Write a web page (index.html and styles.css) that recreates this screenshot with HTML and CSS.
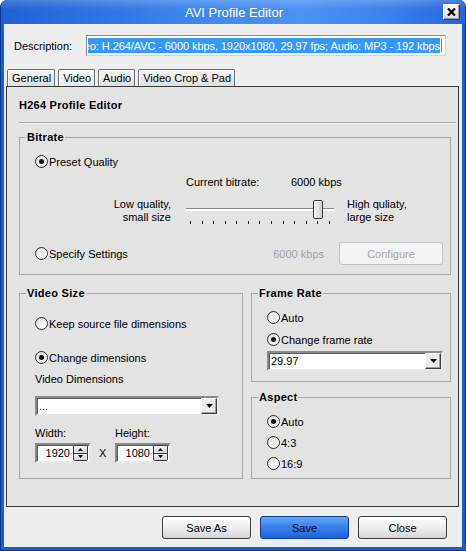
FILE: index.html
```html
<!DOCTYPE html>
<html>
<head>
<meta charset="utf-8">
<title>AVI Profile Editor</title>
<link rel="stylesheet" href="styles.css">
</head>
<body>
<div class="window">
  <div class="titlebar">
    <span></span>
    <span class="title">AVI Profile Editor</span>
    <span class="close-btn"><svg width="9" height="8" viewBox="0 0 9 8"><path d="M1 0.5 L8 7.5 M8 0.5 L1 7.5" stroke="#000" stroke-width="2.2" fill="none"/></svg></span>
  </div>
  <div class="client">
    <div class="desc-row">
      <span class="desc-label">Description:</span>
      <div class="desc-input sunken">
        <div class="desc-sel"><span class="desc-text">eo: H.264/AVC - 6000 kbps, 1920x1080, 29.97 fps; Audio: MP3 - 192 kbps</span></div>
        <span class="caret"></span>
      </div>
    </div>
    <div class="tabs">
      <span class="tab">General</span>
      <span class="tab active">Video</span>
      <span class="tab">Audio</span>
      <span class="tab">Video Crop &amp; Pad</span>
    </div>
    <div class="panel">
      <div class="panel-title">H264 Profile Editor</div>
      <div class="sep"></div>

      <div class="group bitrate">
        <div class="group-title">Bitrate</div>
        <div class="radio-row first"><span class="radio on"></span><span>Preset Quality</span></div>
        <div class="current-row"><span class="cur-label">Current bitrate:</span><span>6000 kbps</span></div>
        <div class="slider-row">
          <div class="low-label">Low quality,<br>small size</div>
          <div class="slider">
            <div class="track"></div>
            <div class="thumb"></div>
            <div class="ticks"><i></i><i></i><i></i><i></i><i></i><i></i><i></i><i></i><i></i><i></i><i></i><i></i><i></i></div>
          </div>
          <div class="high-label">High quliaty,<br>large size</div>
        </div>
        <div class="specify-row">
          <div class="radio-row inline"><span class="radio"></span><span>Specify Settings</span></div>
          <span class="disabled-text">6000 kbps</span>
          <span class="btn disabled">Configure</span>
        </div>
      </div>

      <div class="cols">
        <div class="group videosize">
          <div class="group-title">Video Size</div>
          <div class="radio-row vs1"><span class="radio"></span><span>Keep source file dimensions</span></div>
          <div class="radio-row vs2"><span class="radio on"></span><span>Change dimensions</span></div>
          <div class="vd-label">Video Dimensions</div>
          <div class="combo sunken vd-combo"><span class="combo-text">...</span><span class="combo-btn"><svg width="7" height="4" viewBox="0 0 7 4"><path d="M0 0 H7 L3.5 4 Z" fill="#000"/></svg></span></div>
          <div class="dims">
            <span class="dim-label">Width:</span><span></span><span class="dim-label">Height:</span>
            <div class="spin sunken"><span class="spin-val">1920</span><span class="spin-btns"><span class="sb"><svg width="5" height="3" viewBox="0 0 5 3"><path d="M2.5 0 L5 3 H0 Z" fill="#000"/></svg></span><span class="sb"><svg width="5" height="3" viewBox="0 0 5 3"><path d="M0 0 H5 L2.5 3 Z" fill="#000"/></svg></span></span></div>
            <span class="x-label">X</span>
            <div class="spin sunken"><span class="spin-val">1080</span><span class="spin-btns"><span class="sb"><svg width="5" height="3" viewBox="0 0 5 3"><path d="M2.5 0 L5 3 H0 Z" fill="#000"/></svg></span><span class="sb"><svg width="5" height="3" viewBox="0 0 5 3"><path d="M0 0 H5 L2.5 3 Z" fill="#000"/></svg></span></span></div>
          </div>
        </div>
        <div class="col-right">
          <div class="group framerate">
            <div class="group-title">Frame Rate</div>
            <div class="radio-row fr1"><span class="radio"></span><span>Auto</span></div>
            <div class="radio-row fr2"><span class="radio on"></span><span>Change frame rate</span></div>
            <div class="combo sunken fr-combo"><span class="combo-text">29.97</span><span class="combo-btn"><svg width="7" height="4" viewBox="0 0 7 4"><path d="M0 0 H7 L3.5 4 Z" fill="#000"/></svg></span></div>
          </div>
          <div class="group aspect">
            <div class="group-title">Aspect</div>
            <div class="radio-row as1"><span class="radio on"></span><span>Auto</span></div>
            <div class="radio-row as2"><span class="radio"></span><span>4:3</span></div>
            <div class="radio-row as2"><span class="radio"></span><span>16:9</span></div>
          </div>
        </div>
      </div>
    </div>
    <div class="buttons">
      <span class="btn">Save As</span>
      <span class="btn primary">Save</span>
      <span class="btn">Close</span>
    </div>
  </div>
</div>
</body>
</html>
```
FILE: styles.css
```css
* { box-sizing: border-box; }
html, body { margin: 0; padding: 0; }
body {
  width: 466px;
  height: 551px;
  overflow: hidden;
  font-family: "Liberation Sans", Arial, sans-serif;
  font-size: 11px;
  color: #000;
  background: #ffffff;
}
.window {
  width: 466px;
  height: 551px;
  display: flex;
  flex-direction: column;
  background: #1c5ed6;
  border: 1px solid #0a3593;
  border-top: none;
  border-radius: 7px 7px 0 0;
  overflow: hidden;
}
.titlebar {
  height: 24px;
  flex: none;
  display: grid;
  grid-template-columns: 1fr auto 1fr;
  align-items: center;
  background:
    linear-gradient(to bottom, rgba(255,255,255,0.18), rgba(255,255,255,0) 40%),
    linear-gradient(to right, #1f5fd3 0%, #3a82ea 35%, #4a93f4 65%, #3a80ea 85%, #2463d6 100%);
}
.title {
  color: #fff;
  font-size: 13px;
  padding-left: 2px;
}
.close-btn {
  justify-self: end;
  margin-right: 5px;
  width: 17px;
  height: 16px;
  display: flex;
  align-items: center;
  justify-content: center;
  background: linear-gradient(#f8f8f8, #dcdcdc);
  border: 1px solid;
  border-color: #ffffff #404040 #404040 #ffffff;
  box-shadow: inset -1px -1px #9a9a9a;
}
.client {
  flex: 1;
  margin: 0 3px 3px 3px;
  background: #eeeeee;
  display: flex;
  flex-direction: column;
}
.sunken {
  border: 2px solid;
  border-color: #8a8a8a #e8e8e8 #e8e8e8 #8a8a8a;
  box-shadow: inset 1px 1px #5a5a5a;
  background: #fff;
}
.desc-row {
  display: flex;
  align-items: center;
  height: 21px;
  margin-top: 11px;
  padding-left: 10px;
}
.desc-label { width: 72px; }
.desc-input {
  width: 360px;
  height: 21px;
  display: flex;
  align-items: stretch;
  padding: 1px 1px 1px 0;
  border-width: 1px;
  border-color: #8c8c8c #d4d4d4 #d4d4d4 #8c8c8c;
  box-shadow: none;
}
.desc-sel {
  flex: 1;
  display: flex;
  justify-content: flex-end;
  align-items: center;
  overflow: hidden;
  white-space: nowrap;
  background: #3399ff;
  color: #fff;
  margin: 1px 0 1px 1px;
}
.desc-text {
  letter-spacing: -0.08px;
}
.caret {
  width: 1px;
  margin: 2px 2px 2px 1px;
  background: #c8701a;
}
.tabs {
  display: flex;
  gap: 3px;
  height: 17px;
  margin-top: 13px;
  padding-left: 3px;
  flex: none;
}
.tab {
  height: 17px;
  line-height: 16px;
  padding: 0 3px 0 4px;
  border: 1px solid #6e6e6e;
  border-bottom: none;
  border-radius: 2px 2px 0 0;
  background: linear-gradient(#f6f6f6, #dedede);
  box-shadow: inset 1px 1px #ffffff;
}
.tab.active {
  background: linear-gradient(#ffffff, #e9e9e9);
}
.panel {
  height: 421px;
  flex: none;
  margin: 0 3px 0 2px;
  border: 1px solid #3a3a3a;
  background: #e3e3e3;
  display: flex;
  flex-direction: column;
}
.panel-title {
  font-weight: bold;
  letter-spacing: 0.25px;
  line-height: 13px;
  padding: 12px 0 0 12px;
}
.sep {
  margin: 10px 2px 0 12px;
  height: 2px;
  border-top: 1px solid #a6a6a6;
  border-bottom: 1px solid #f6f6f6;
}
.group {
  border: 1px solid #a8a8a8;
  display: flex;
  flex-direction: column;
  align-items: flex-start;
}
.group-title {
  font-weight: bold;
  letter-spacing: 0.3px;
  line-height: 13px;
  margin: -7px 0 0 6px;
  padding: 0 1px;
  background: #e3e3e3;
}
.bitrate {
  margin: 13px 7px 0 12px;
  padding-bottom: 9px;
  align-items: stretch;
}
.bitrate .group-title { align-self: flex-start; }
.radio-row {
  display: flex;
  align-items: center;
  gap: 1px;
  height: 17px;
  padding-left: 15px;
}
.radio {
  width: 13px;
  height: 13px;
  border-radius: 50%;
  border: 1px solid #2e2e2e;
  background: linear-gradient(135deg, #d4d4d4, #ffffff 70%);
  display: flex;
  align-items: center;
  justify-content: center;
  flex: none;
}
.radio.on::after {
  content: "";
  width: 5px;
  height: 5px;
  border-radius: 50%;
  background: #111;
}
.radio-row.first { margin-top: 9px; }
.current-row {
  display: flex;
  line-height: 13px;
  margin-top: 6px;
  padding-left: 166px;
}
.cur-label { width: 105px; }
.slider-row {
  display: flex;
  margin-top: 9px;
  line-height: 13px;
}
.low-label {
  width: 151px;
  text-align: right;
}
.slider {
  position: relative;
  width: 148px;
  height: 28px;
  margin-left: 15px;
}
.track {
  position: absolute;
  left: 0;
  right: 0;
  top: 10px;
  height: 3px;
  border-top: 1px solid #8a8a8a;
  background: #ffffff;
}
.thumb {
  position: absolute;
  left: 127px;
  top: 2px;
  width: 10px;
  height: 19px;
  border: 1px solid #3a3a3a;
  border-radius: 2px;
  background: linear-gradient(to right, #f6f6f6, #cfcfcf);
  box-shadow: inset 1px 1px #ffffff;
}
.ticks {
  position: absolute;
  left: 4px;
  right: 4px;
  top: 23px;
  height: 4px;
  display: flex;
  justify-content: space-between;
}
.ticks i {
  width: 1px;
  height: 3px;
  background: #111;
}
.high-label { margin-left: 13px; }
.specify-row {
  display: flex;
  align-items: center;
  margin-top: 16px;
  padding-right: 7px;
}
.radio-row.inline { flex: 1; }
.disabled-text {
  color: #a4a4a4;
  margin-right: 15px;
}
.btn {
  width: 89px;
  height: 23px;
  display: flex;
  align-items: center;
  justify-content: center;
  border: 1px solid #3c3c3c;
  border-radius: 3px;
  background: linear-gradient(#ffffff, #f0f0f0 45%, #d6d6d6);
}
.btn.disabled {
  width: 104px;
  color: #a8a8a8;
  border-color: #c2c2c2;
  background: #f3f3f3;
}
.btn.primary {
  border-color: #0c3a98;
  background: linear-gradient(#64a8f8, #3a82ee 45%, #1f62d6);
  color: #0a0a0a;
}
.cols {
  display: flex;
  gap: 8px;
  margin: 18px 7px 0 12px;
}
.videosize {
  width: 224px;
  height: 186px;
}
.col-right {
  width: 200px;
  display: flex;
  flex-direction: column;
}
.vs1 { margin-top: 15px; }
.vs2 { margin-top: 17px; }
.vd-label {
  line-height: 13px;
  margin: 7px 0 0 15px;
}
.combo {
  height: 20px;
  display: flex;
  align-items: center;
}
.combo-text {
  flex: 1;
  padding-left: 2px;
  line-height: 14px;
}
.combo-btn {
  width: 16px;
  height: 16px;
  display: flex;
  align-items: center;
  justify-content: center;
  background: #ececec;
  border: 1px solid;
  border-color: #ffffff #404040 #404040 #ffffff;
  box-shadow: inset -1px -1px #a0a0a0;
}
.vd-combo {
  width: 184px;
  margin: 10px 0 0 15px;
}
.dims {
  display: grid;
  grid-template-columns: 56px 24px 56px;
  grid-template-rows: 13px 20px;
  row-gap: 3px;
  margin: 11px 0 0 15px;
  line-height: 13px;
}
.x-label {
  align-self: center;
  padding-left: 8px;
}
.spin {
  display: flex;
  align-items: center;
  height: 20px;
}
.spin-val {
  flex: 1;
  text-align: right;
  padding-right: 3px;
}
.spin-btns {
  width: 15px;
  height: 16px;
  margin-right: 1px;
  display: flex;
  flex-direction: column;
  border: 1px solid #3a3a3a;
  border-radius: 2px;
  overflow: hidden;
}
.sb {
  flex: 1;
  display: flex;
  align-items: center;
  justify-content: center;
  background: linear-gradient(#f4f4f4, #d2d2d2);
}
.sb + .sb { border-top: 1px solid #3a3a3a; }
.framerate {
  height: 89px;
}
.fr1 { margin-top: 9px; }
.fr2 { margin-top: 5px; }
.fr-combo {
  width: 176px;
  margin: 3px 0 0 15px;
}
.aspect {
  flex: 1;
  margin-top: 15px;
}
.as1 { margin-top: 9px; }
.as2 { margin-top: 4px; }
.buttons {
  display: flex;
  justify-content: flex-end;
  gap: 9px;
  margin-top: 9px;
  padding-right: 15px;
}
```
